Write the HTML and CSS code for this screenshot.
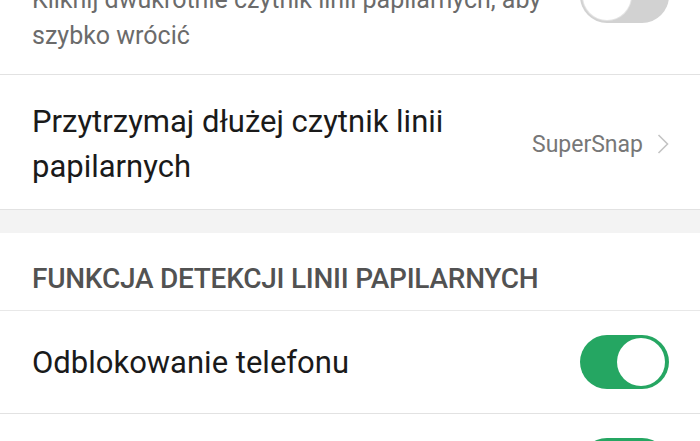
FILE: index.html
```html
<!DOCTYPE html>
<html lang="pl">
<head>
<meta charset="utf-8">
<link rel="stylesheet" href="styles.css">
</head>
<body>
<div class="screen">
  <div class="row row-switch-top">
    <div class="texts">
      <div class="title">Szybki powrót</div>
      <div class="subtitle">Kliknij dwukrotnie czytnik linii papilarnych, aby szybko wrócić</div>
    </div>
    <span class="switch off"><span class="knob"></span></span>
  </div>
  <div class="row row-link">
    <div class="title two-line">Przytrzymaj dłużej czytnik linii papilarnych</div>
    <div class="value">SuperSnap
      <svg class="chevron" width="12" height="20" viewBox="0 0 12 20"><path d="M1.5 1 L10.5 10 L1.5 19" fill="none" stroke="#c4c4c4" stroke-width="1.6"/></svg>
    </div>
  </div>
  <div class="band"></div>
  <div class="section-header">FUNKCJA DETEKCJI LINII PAPILARNYCH</div>
  <div class="row row-toggle">
    <div class="title">Odblokowanie telefonu</div>
    <span class="switch on"><span class="knob"></span></span>
  </div>
  <div class="row row-toggle">
    <div class="title">Autoryzacja płatności</div>
    <span class="switch on"><span class="knob"></span></span>
  </div>
</div>
</body>
</html>
```

FILE: styles.css
```css
html, body {
  margin: 0;
  padding: 0;
  background: #ffffff;
  overflow: hidden;
}
body {
  width: 700px;
  height: 441px;
  font-family: Roboto, "Noto Sans", sans-serif;
  color: #1c1c1c;
}
.screen {
  margin-top: -82px;
  display: flex;
  flex-direction: column;
}
.row {
  display: flex;
  align-items: center;
  justify-content: space-between;
  padding: 0 31px 0 32px;
  border-bottom: 1px solid #e2e2e2;
  background: #fff;
}
.title {
  font-size: 31px;
  line-height: 45px;
  color: #1a1a1a;
}
.row-switch-top {
  padding-top: 20px;
  padding-bottom: 20px;
}
.row-switch-top .title {
  line-height: 40px;
  margin-bottom: 4px;
}
.subtitle {
  font-size: 25px;
  line-height: 36px;
  color: #6b6b6b;
  width: 530px;
}
.row-link {
  padding-top: 24px;
  padding-bottom: 20px;
}
.two-line {
  width: 440px;
}
.value {
  display: flex;
  align-items: center;
  gap: 14px;
  font-size: 23px;
  color: #777777;
}
.chevron {
  display: block;
  margin-top: -1px;
}
.band {
  height: 23px;
  background: #f3f3f3;
}
.section-header {
  padding: 31px 32px 16px;
  font-size: 28px;
  font-weight: 500;
  line-height: 30px;
  color: #525252;
  border-bottom: 1px solid #e8e8e8;
  letter-spacing: -0.25px;
}
.row-toggle {
  height: 102px;
  box-sizing: content-box;
}
.switch {
  position: relative;
  width: 89px;
  height: 54px;
  border-radius: 27px;
  flex: none;
}
.switch .knob {
  position: absolute;
  top: 3px;
  width: 48px;
  height: 48px;
  border-radius: 50%;
  background: #fff;
}
.switch.on {
  background: #25a662;
}
.switch.on .knob {
  right: 4px;
}
.switch.off {
  background: #d2d2d2;
}
.switch.off .knob {
  left: 3px;
  box-shadow: 0 0 0 1px #e4e4e4;
}
```
